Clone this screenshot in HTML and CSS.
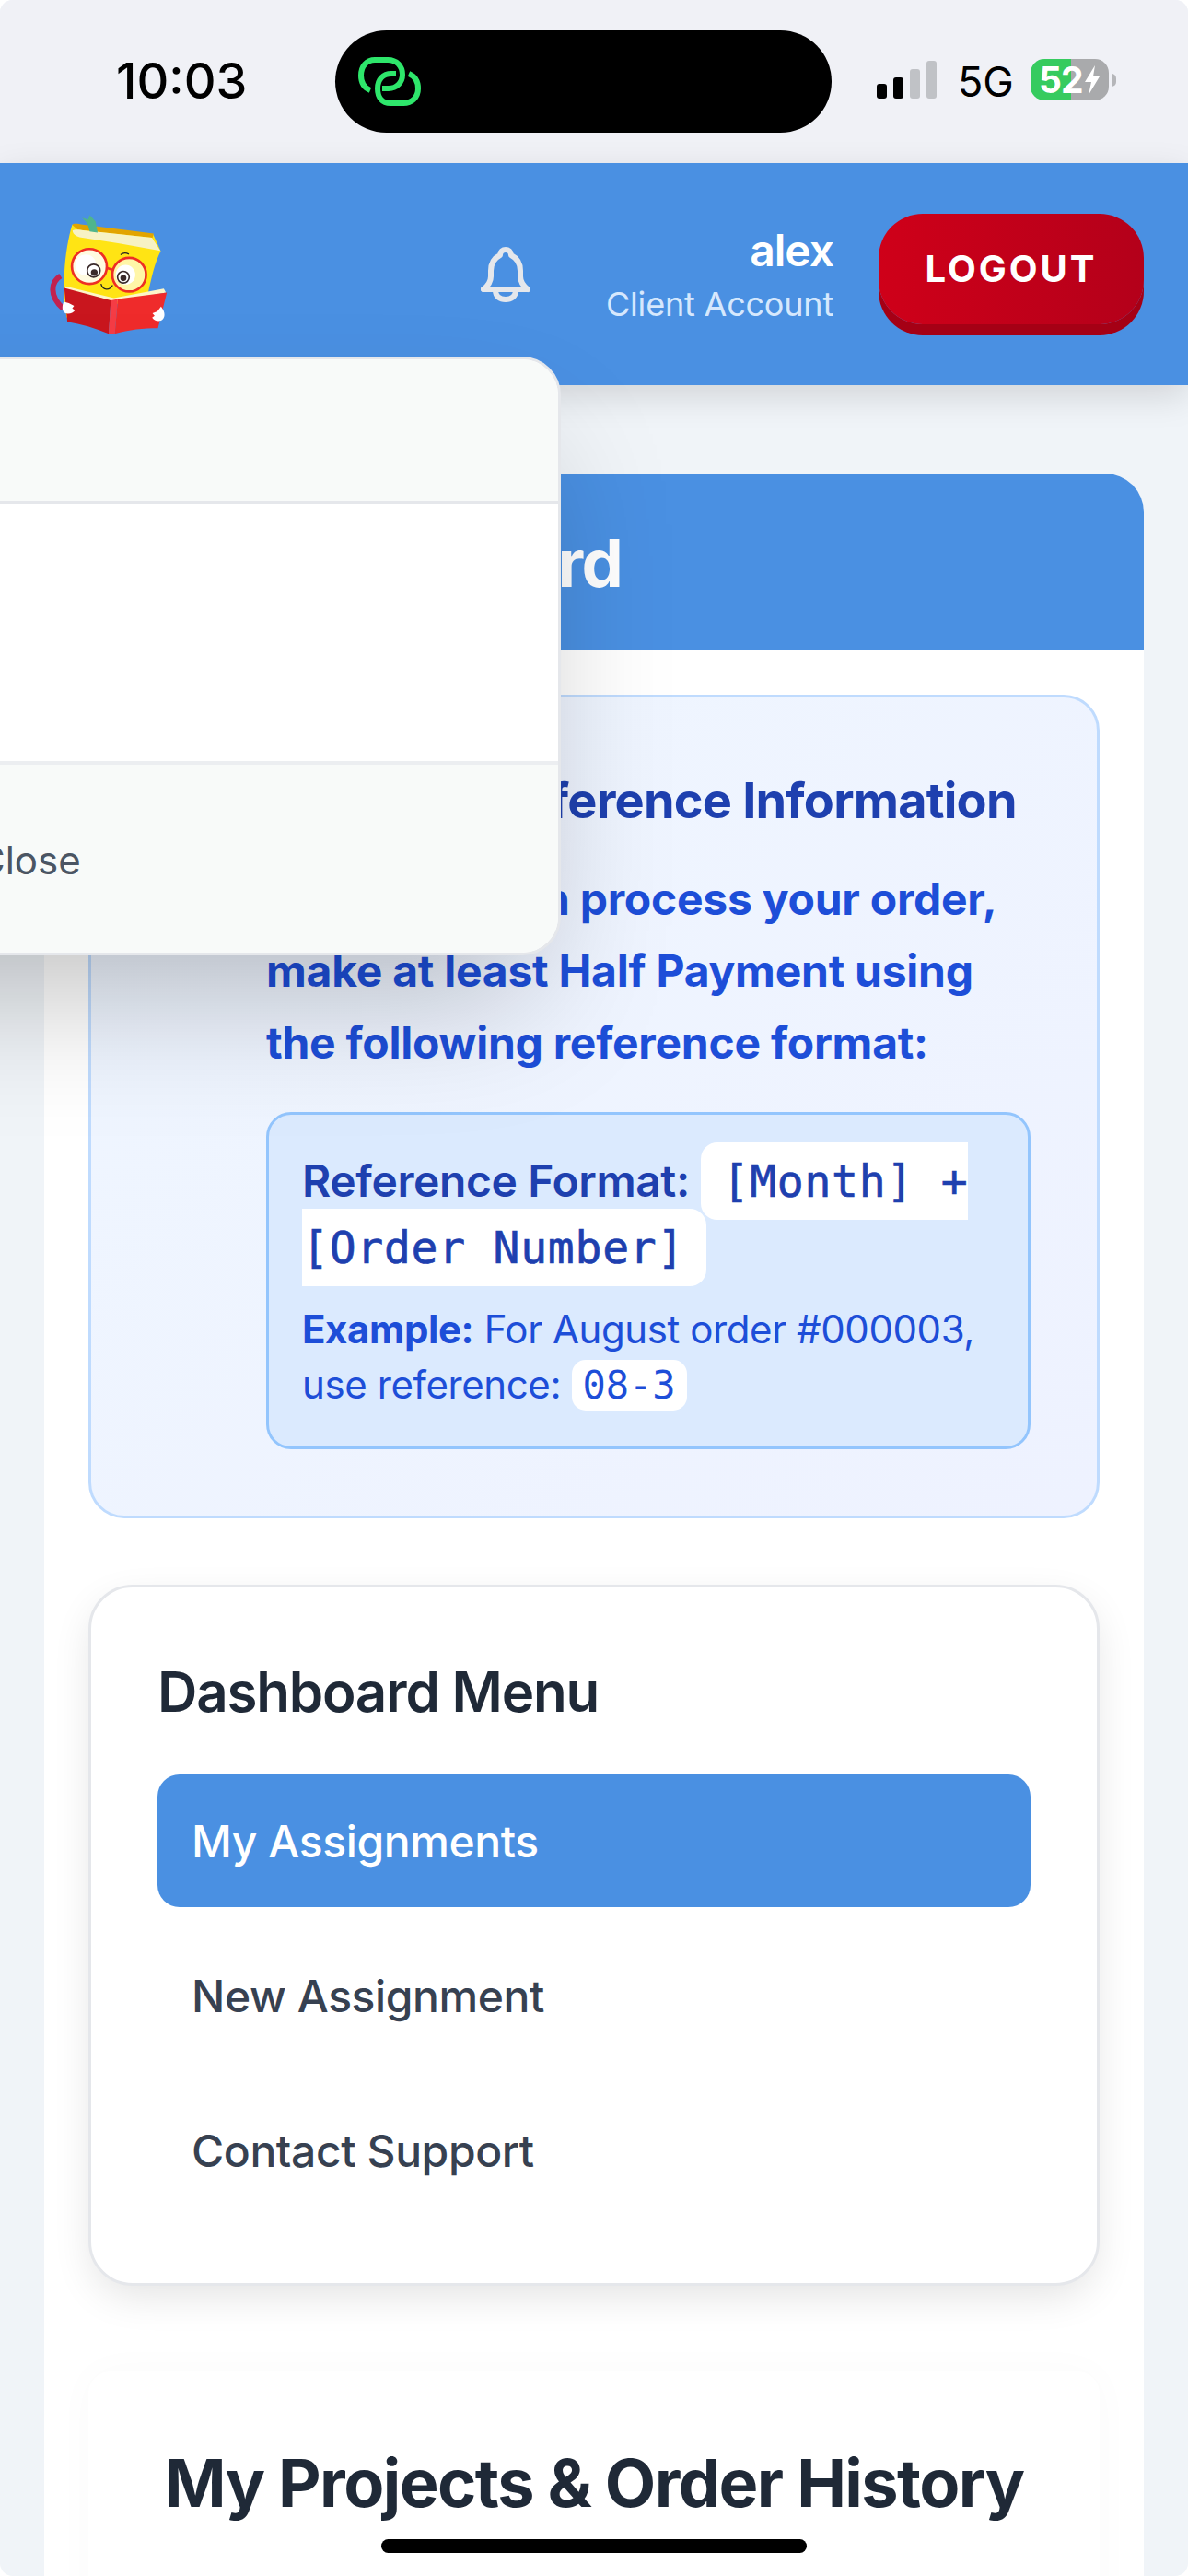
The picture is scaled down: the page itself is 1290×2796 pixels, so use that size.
FILE: index.html
```html
<!DOCTYPE html>
<html lang="en">
<head>
<meta charset="utf-8">
<title>Client Dashboard</title>
<link rel="stylesheet" href="styles.css">
</head>
<body>
<div class="screen">
  <div class="status">
    <span class="time">10:03</span>
    <div class="island">
      <svg class="link-icon" width="68" height="53" viewBox="0 0 68 53" fill="none" stroke="#2ee66b" stroke-width="6" stroke-linecap="butt"><path d="M13 36C6 33 3 27 3 20C3 10 9 3 18 3H32C42 3 48 10 48 19C48 27 42 34 33 34H26"/><path d="M55 18C62 21 65 27 65 34C65 44 58 50 49 50H35C26 50 21 44 21 34C21 24 27 18 36 18H41"/></svg>
    </div>
    <div class="signal"><i class="b1"></i><i class="b2"></i><i class="b3"></i><i class="b4"></i></div>
    <span class="net">5G</span>
    <div class="battery"><span class="batt-num">52</span><svg class="bolt" width="18" height="32" viewBox="0 0 18 32"><path fill="#fff" d="M12 0L1 18H8L5 32L17 12H10Z"/></svg></div>
    <i class="nub"></i>
  </div>

  <header class="topbar">
    <svg class="logo" width="130" height="133" viewBox="70 60 390 400">
      <path d="M108 266C76 285 70 332 116 372" fill="none" stroke="#c2224f" stroke-width="18"/>
      <path d="M146 98L410 130L435 185C415 225 405 270 392 330L128 402C112 320 118 190 146 98Z" fill="#ffe414"/>
      <path d="M146 100C150 92 165 96 180 98L412 128L408 141L165 116Z" fill="#e2a400"/>
      <path d="M147 118C158 112 170 116 190 118L406 141L434 184L300 160L170 140C155 135 148 128 147 118Z" fill="#f7f2c4"/>
      <path d="M178 76L198 82L203 67L222 88L229 125L203 121L196 95Z" fill="#4fb58d"/>
      <circle cx="202" cy="235" r="57" fill="#fffbe0" stroke="#ee2e24" stroke-width="8"/>
      <circle cx="332" cy="262" r="55" fill="#fff6a8" stroke="#ee2e24" stroke-width="8"/>
      <circle cx="190" cy="230" r="34" fill="#fff"/>
      <circle cx="320" cy="262" r="32" fill="#fff"/>
      <path d="M258 240L277 246" stroke="#ee2e24" stroke-width="8"/>
      <circle cx="216" cy="249" r="21" fill="#fff" stroke="#3a2a2a" stroke-width="5"/>
      <circle cx="218" cy="255" r="11" fill="#3a2a2a"/>
      <circle cx="313" cy="270" r="19" fill="#fff" stroke="#3a2a2a" stroke-width="5"/>
      <circle cx="313" cy="273" r="10" fill="#3a2a2a"/>
      <path d="M304 197C312 190 322 190 331 195" fill="none" stroke="#222" stroke-width="4"/>
      <path d="M240 292C246 314 268 314 278 296" fill="none" stroke="#222" stroke-width="4"/>
      <path d="M125 300L282 338L445 307L452 320L290 350L122 310Z" fill="#fdf6c8"/>
      <path d="M120 305L272 346L265 455C220 436 175 424 130 416Z" fill="#c9161e"/>
      <path d="M272 346L295 341L285 455L265 455Z" fill="#f53c45"/>
      <path d="M295 341L455 320L426 437C380 437 330 442 285 455Z" fill="#ef2b2b"/>
      <path d="M118 350C112 365 112 382 124 388C136 392 150 386 155 378L146 372L152 364L135 355Z" fill="#fff"/>
      <path d="M436 366C452 385 450 405 436 412C424 416 412 410 407 402L415 396L408 388L424 382Z" fill="#fff"/>
    </svg>
    <svg class="bell" width="54" height="60" viewBox="0 0 54 60" fill="none" stroke="#e5e7eb" stroke-width="6" stroke-linecap="round" stroke-linejoin="round"><path d="M3 46H51"/><path d="M3 46C8 42 11 38 11 32V26C11 16 17 11 21 9C21 5 24 3 27 3C30 3 33 5 33 9C37 11 43 16 43 26V32C43 38 46 42 51 46"/><path d="M16 47C16 54 21 57 27 57C33 57 38 54 38 47"/></svg>
    <div class="user">
      <div class="user-name">alex</div>
      <div class="user-role">Client Account</div>
    </div>
    <button class="logout">LOGOUT</button>
  </header>

  <main class="panel">
    <div class="panel-head"><h1>Client Dashboard</h1></div>
    <div class="panel-body">
      <section class="info">
        <div class="info-col">
          <h2>Payment Reference Information</h2>
          <p class="lead">Before we can process your order, make at least Half Payment using the following reference format:</p>
          <div class="ref">
            <p class="ref-format">Reference Format: <code class="code-lg">[Month] + [Order Number]</code></p>
            <p class="ref-example"><strong>Example:</strong> For August order #000003, use reference: <code class="code-sm">08-3</code></p>
          </div>
        </div>
      </section>

      <nav class="menu">
        <h3>Dashboard Menu</h3>
        <div class="menu-list">
          <a class="menu-item active">My Assignments</a>
          <a class="menu-item">New Assignment</a>
          <a class="menu-item">Contact Support</a>
        </div>
      </nav>

      <section class="projects">
        <h2>My Projects &amp; Order History</h2>
      </section>
    </div>
  </main>

  <div class="modal">
    <div class="modal-head"></div>
    <div class="modal-body"></div>
    <div class="modal-foot"><span class="modal-close">Close</span></div>
  </div>

  <div class="home-bar"></div>
</div>
</body>
</html>
```
FILE: styles.css
```css
* { box-sizing: border-box; }
html, body { margin: 0; padding: 0; background: #fff; }
body { font-family: "Inter", "Noto Sans", sans-serif; }
.screen {
  position: relative;
  width: 1290px;
  height: 2796px;
  overflow: hidden;
  background: #f0f4f8;
  border-radius: 14px;
}
h1, h2, h3, p { margin: 0; }

/* status bar */
.status {
  height: 177px;
  background: #f0f1f6;
  display: flex;
  align-items: flex-start;
  padding-left: 126px;
}
.time { width: 238px; margin-top: 56px; font-size: 54px; line-height: 64px; font-weight: 500; color: #000; }
.island { width: 539px; height: 111px; margin-top: 33px; background: #000; border-radius: 56px; padding: 29px 0 0 25px; }
.link-icon { display: block; }
.signal { display: flex; align-items: flex-end; gap: 7px; height: 41px; margin: 66px 0 0 49px; }
.signal i { display: block; width: 11px; border-radius: 3px; background: #c0c2c6; }
.signal .b1 { height: 16px; background: #000; }
.signal .b2 { height: 23px; background: #000; }
.signal .b3 { height: 32px; }
.signal .b4 { height: 41px; }
.net { margin: 62px 0 0 23px; width: 79px; font-size: 45px; line-height: 54px; font-weight: 400; color: #000; }
.battery {
  width: 85px; height: 45px; margin-top: 64px;
  border-radius: 15px;
  background: linear-gradient(90deg, #36cb5f 0 44px, #a9aaac 44px);
  display: flex; align-items: center; padding-left: 9px;
}
.batt-num { font-size: 39px; line-height: 45px; font-weight: 700; color: #fff; letter-spacing: -1px; }
.bolt { margin-left: 1px; }
.nub { width: 5px; height: 14px; margin: 80px 0 0 3px; border-radius: 0 5px 5px 0; background: #b5b6b9; }

/* top bar */
.topbar {
  position: relative;
  z-index: 2;
  height: 241px;
  background: #4a90e2;
  display: flex;
  align-items: center;
  padding: 0 48px 0 53px;
  box-shadow: 0 12px 36px rgba(0, 0, 0, .13);
}
.logo { display: block; }
.bell { margin-left: 339px; }
.user { margin-left: 82px; width: 247px; text-align: right; white-space: nowrap; }
.user-name { font-size: 48px; line-height: 60px; font-weight: 600; letter-spacing: -1px; color: #fff; }
.user-role { font-size: 36px; line-height: 48px; font-weight: 400; color: #d6e8fd; letter-spacing: -.2px; margin-top: 4px; }
.logout {
  margin-left: 49px;
  margin-top: -12px;
  width: 288px;
  height: 120px;
  border: 0;
  border-radius: 48px;
  background: linear-gradient(90deg, #cf0019, #b4001a);
  box-shadow: 0 12px 0 #a50015;
  font-family: inherit;
  font-size: 40px;
  font-weight: 700;
  letter-spacing: 3px;
  color: #fff;
}

/* main panel */
.panel {
  margin: 96px 48px 0;
  background: #fff;
  border-radius: 42px 42px 0 0;
  height: 2400px;
}
.panel-head {
  height: 192px;
  background: #4a90e2;
  border-radius: 42px 42px 0 0;
  display: flex;
  align-items: center;
  padding-left: 44px;
}
.panel-head h1 { font-size: 72px; font-weight: 700; letter-spacing: -1.5px; color: #fff; white-space: nowrap; }
.panel-body { padding: 48px; }

/* info */
.info {
  border: 3px solid #bfdbfe;
  border-radius: 39px;
  background: linear-gradient(135deg, #eff6ff, #eef2ff);
  padding: 76px 72px 72px 190px;
  height: 894px;
}
.info h2 { font-size: 54px; line-height: 72px; font-weight: 700; letter-spacing: -.8px; color: #1e40af; white-space: nowrap; margin-left: 4px; }
.lead { margin-top: 32px; font-size: 48px; line-height: 78px; font-weight: 700; letter-spacing: -.25px; color: #1d4ed8; }
.ref {
  margin-top: 36px;
  border: 3px solid #93c5fd;
  border-radius: 27px;
  background: #dbeafe;
  padding: 36px;
}
.ref-format { font-size: 48px; line-height: 72px; font-weight: 600; letter-spacing: -.4px; color: #1e40af; }
.code-lg {
  font-family: "DejaVu Sans Mono", "Liberation Mono", monospace;
  font-size: 48px;
  font-weight: 500;
  letter-spacing: .75px;
  -webkit-text-stroke: .7px currentColor;
  background: #fff;
  padding: 14px 24px;
  border-radius: 18px;
}
.ref-example { margin-top: 23px; font-size: 42px; line-height: 60px; letter-spacing: -.4px; color: #1d4ed8; }
.ref-example strong { font-weight: 700; }
.code-sm {
  font-family: "DejaVu Sans Mono", "Liberation Mono", monospace;
  font-size: 42px;
  letter-spacing: 0;
  background: #fff;
  padding: 3px 12px;
  border-radius: 15px;
}

/* menu */
.menu {
  margin-top: 72px;
  border: 3px solid #e5e7eb;
  border-radius: 48px;
  background: #fff;
  padding: 77px 72px 72px;
  height: 761px;
  box-shadow: 0 15px 45px -6px rgba(0, 0, 0, .12);
}
.menu h3 { font-size: 60px; line-height: 72px; font-weight: 600; letter-spacing: -1.2px; color: #1f2937; }
.menu-list { margin-top: 54px; display: flex; flex-direction: column; gap: 24px; }
.menu-item {
  display: flex;
  align-items: center;
  height: 144px;
  padding-left: 37px;
  border-radius: 24px;
  font-size: 48px;
  font-weight: 500;
  letter-spacing: -.4px;
  color: #374151;
}
.menu-item.active { background: #4a90e2; color: #fff; }

/* projects */
.projects {
  margin-top: 93px;
  background: #fff;
  border-radius: 24px;
  padding-top: 73px;
  height: 400px;
  box-shadow: 0 0 45px rgba(0, 0, 0, .025);
  text-align: center;
}
.projects h2 { font-size: 72px; line-height: 96px; font-weight: 700; letter-spacing: -1.55px; color: #1f2937; white-space: nowrap; }

/* modal overlay */
.modal {
  position: absolute;
  z-index: 5;
  left: -400px;
  top: 387px;
  width: 1009px;
  height: 650px;
  border: 3px solid #e5e7eb;
  border-radius: 42px;
  background: #fff;
  overflow: hidden;
  display: flex;
  flex-direction: column;
  box-shadow: 0 75px 150px -36px rgba(0, 0, 0, .25);
}
.modal-head { height: 157px; background: #f8faf9; border-bottom: 3px solid #e5e7eb; }
.modal-body { flex: 1; background: #fff; }
.modal-foot {
  height: 208px;
  background: #f8faf9;
  border-top: 4px solid #eceef1;
  display: flex;
  align-items: center;
  padding-left: 372px;
  padding-top: 4px;
}
.modal-close { font-size: 42px; line-height: 60px; color: #4b5563; }

.home-bar {
  position: absolute;
  z-index: 6;
  left: 414px;
  top: 2756px;
  width: 462px;
  height: 15px;
  border-radius: 8px;
  background: #000;
}
```
